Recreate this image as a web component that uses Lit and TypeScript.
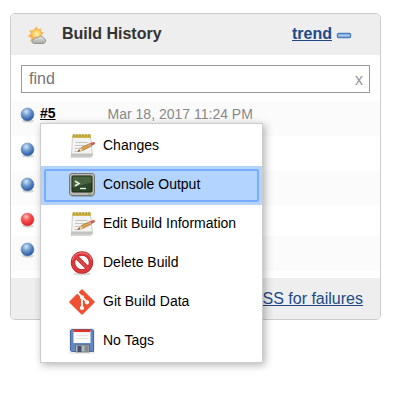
import { LitElement, html, css, svg } from "lit";
import { customElement, state } from "lit/decorators.js";

const weather = html`<svg class="weather" viewBox="0 0 20 20" aria-hidden="true">
  <defs>
    <radialGradient id="sun"><stop offset="0" stop-color="#fff6b0" /><stop offset="1" stop-color="#fbc04a" /></radialGradient>
    <linearGradient id="cloud" x2="0" y2="1"><stop offset="0" stop-color="#e8e8e6" /><stop offset="1" stop-color="#a9aaa7" /></linearGradient>
  </defs>
  <path fill="#f9b356" d="M9.500 0.500l1.500 3.500 3.500-1.800-1 3.600 4 1-3.500 2 1.500 4-9 1.500-3.500 1.200 1.500-3.500L.5 10l3.500-2.200L2.200 4l3.900.8z" />
  <circle cx="9.500" cy="8" r="5" fill="url(#sun)" stroke="#f5b04c" stroke-width=".7" />
  <path fill="url(#cloud)" stroke="#858683" stroke-width=".8" d="M7.500 17.500C4.500 17.500 4 14 6.800 13.300 7.300 11.400 9.500 10.800 11 11.800 12.500 9.300 16 9.800 16.500 12 19.800 12.800 19 17.500 16 17.500z" />
</svg>`;

const ball = (kind: string) => {
  const red = kind === "red";
  return html`<svg class="ball" viewBox="0 0 16 16" role="img" aria-label=${red ? "Failed" : "Success"}>
    <defs>
      <radialGradient id=${`ball-${kind}`} cx=".4" cy=".28" r=".72">
        <stop offset="0" stop-color=${red ? "#ffc4c4" : "#d6e6f6"} />
        <stop offset=".45" stop-color=${red ? "#fa5050" : "#6d9bd0"} />
        <stop offset="1" stop-color=${red ? "#d81c28" : "#25529a"} />
      </radialGradient>
    </defs>
    <ellipse cx="8" cy="14" rx="6" ry="1.600" fill="#000" opacity=".15" />
    <circle cx="7.500" cy="7.500" r="6.500" fill=${`url(#ball-${kind})`} stroke=${red ? "#d8636b" : "#6a8cb8"} stroke-width=".6" />
  </svg>`;
};

const notepad = svg`
  <path d="M2 23h20l1 2H1z" fill="#000" opacity=".15" />
  <path d="M3.500 3h18l2 19.500h-21z" fill="#f3f3f1" stroke="#c4c4c0" stroke-width=".8" />
  <path d="M2 20.500h21.500v3H2z" fill="#c2c2be" />
  <path d="M6.500 9.500h12M6 12.500h11M6 15.500h6M5.500 18.500h3" stroke="#c4c4c1" />
  <path d="M3.500 1.500h18.500v3.500H3.300z" fill="#d0b94c" />
  <path d="M5 1v3M8 1v3M11 1v3M14 1v3M17 1v3M20 1v3" stroke="#a38d30" />
  <path d="M9 18.500l3-3.800 9-4.200 1.600 2.500-9 4.500z" fill="#dfa04c" stroke="#94682e" stroke-width=".6" />
  <path d="M9 18.500l3-3.800 1.500 2.800z" fill="#ead6b4" />
  <path d="M8.500 18.800l1.500-2 1 1.300z" fill="#3d3020" />
  <path d="M20.800 10.600l3-1.600 2.200.6-.3 1.700-3.200 1.700z" fill="#d35a50" />
  <path d="M20 11l1-.5 1.500 2.500-1 .5z" fill="#bcbcbc" />`;

const terminal = svg`
  <path d="M4 23h18l2 2H2z" fill="#000" opacity=".2" />
  <rect x=".5" y="1.500" width="25" height="22" rx="2.500" fill="#b6b8b1" stroke="#777971" />
  <rect x="3" y="4" width="20" height="16" rx="1" fill="#2d4528" stroke="#172414" />
  <path d="M3.500 4.500h19v6l-19 5z" fill="#56704c" opacity=".7" />
  <path d="M6 9l4 2.500L6 14" fill="none" stroke="#e6f1df" stroke-width="1.600" />
  <path d="M11 16.500h6" stroke="#e6f1df" stroke-width="1.400" />
  <path d="M19 22h3" stroke="#7aa85a" />`;

const forbidden = svg`
  <ellipse cx="13" cy="24" rx="9" ry="1.500" fill="#000" opacity=".15" />
  <circle cx="13" cy="12.500" r="9" fill="#fff" fill-opacity=".8" stroke="#c0272d" stroke-width="4.400" />
  <path d="M6.500 6l13 13" stroke="#c0272d" stroke-width="4" />
  <circle cx="13" cy="12.500" r="9" fill="none" stroke="#d9393d" stroke-width="3" />
  <path d="M6.500 6l13 13" stroke="#dc4448" stroke-width="2.800" />
  <path d="M3.400 10a10 10 0 0 1 19.200 0" fill="none" stroke="#ee8484" stroke-width="1" />`;

const git = svg`
  <path d="M13 1.500L24.500 13 13 24.500 1.500 13z" fill="#f05133" stroke="#f05133" stroke-width="2.400" stroke-linejoin="round" />
  <path d="M8.500 3.500L13 8v11M13 8l5 5" fill="none" stroke="#fff" stroke-width="1.800" />
  <circle cx="13" cy="8.300" r="2" fill="#fff" /><circle cx="13" cy="19" r="2.100" fill="#fff" /><circle cx="18" cy="13.300" r="2.100" fill="#fff" />`;

const floppy = svg`
  <path d="M0 0h26v26H0z" fill="#ececec" />
  <path d="M2.500 1.500h21l1 1v21h-22l-1-1v-20z" fill="#6288c4" stroke="#4a689c" />
  <path d="M4.500 2h17v13h-17z" fill="#fbfbfb" />
  <path d="M4.500 1.500h17V4h-17z" fill="#e23326" />
  <path d="M7 7.500h12M7 10.500h12" stroke="#e4e4e4" />
  <path d="M6.500 17h14v7h-14z" fill="#b6b9bb" stroke="#4d5a6c" stroke-width=".7" />
  <path d="M8.500 18h4v6h-4z" fill="#41506b" />
  <path d="M15.500 17.500h4v6.500h-4z" fill="#85898d" />`;

@customElement("app-root")
export class AppRoot extends LitElement {
  @state() private active = 1;

  private builds = ["blue", "blue", "blue", "red", "blue"];
  private items = [
    { label: "Changes", icon: notepad },
    { label: "Console Output", icon: terminal },
    { label: "Edit Build Information", icon: notepad },
    { label: "Delete Build", icon: forbidden },
    { label: "Git Build Data", icon: git },
    { label: "No Tags", icon: floppy },
  ];

  static styles = css`
    :host {
      display: block;
      padding: 13px 31px 56px 10px;
      font: 14px/20px "Liberation Sans", Arial, sans-serif;
      color: #333;
    }
    * { box-sizing: border-box; }
    svg { display: block; flex: none; }
    a { color: #204a87; }
    .panel { border: 1px solid #ccc; border-radius: 5px; }
    .header {
      display: flex;
      align-items: center;
      height: 41px;
      padding: 0 28px 2px 16px;
      background: #eee;
      border-radius: 4px 4px 0 0;
      font-size: 16px;
      font-weight: bold;
    }
    .weather { width: 20px; height: 20px; margin-top: 4px; }
    h1 { flex: 1; margin: 0 0 0 15px; font-size: 16px; }
    .collapse { width: 16px; height: 16px; padding: 0; border: 0; margin-left: 4px; background: none; }
    .search { position: relative; padding: 10px 10px 8px; }
    .search input {
      display: block;
      width: 100%;
      height: 28px;
      padding: 0 28px 0 7px;
      border: 1px solid #999;
      border-radius: 0;
      font: 16px "Liberation Sans", Arial, sans-serif;
      color: #333;
    }
    .search input::placeholder { color: #757575; opacity: 1; }
    .clear {
      position: absolute;
      top: 15px;
      right: 13px;
      width: 16px;
      padding: 0;
      border: 0;
      background: none;
      font: 16px/20px "Liberation Sans", Arial, sans-serif;
      color: #999;
    }
    .builds { margin: 0; padding: 0 0 7px; list-style: none; }
    .build { position: relative; display: flex; height: 35px; padding: 6px 9px 0; }
    .build:nth-child(odd) { background: #fbfbfb; }
    .build.red { height: 30px; }
    .ball { width: 16px; height: 16px; }
    .number { margin: -4px 0 0 4px; height: 20px; font-weight: bold; color: #000; }
    .date { margin: -3px 0 0 52px; color: #888; }
    .footer {
      display: flex;
      justify-content: flex-end;
      align-items: center;
      height: 41px;
      padding: 0 17px;
      background: #eee;
      border-radius: 0 0 4px 4px;
      font-size: 16px;
    }
    .menu {
      position: absolute;
      z-index: 1;
      top: 22px;
      left: 29px;
      width: 223px;
      padding: 3px 0 1px;
      border: 1px solid #ccc;
      background: #fff;
      box-shadow: 2px 2px 8px rgba(0, 0, 0, 0.3);
    }
    .item {
      display: flex;
      align-items: center;
      width: 100%;
      height: 39px;
      padding: 3px;
      border: 0;
      background: none;
      font: 14px/20px "Liberation Sans", Arial, sans-serif;
      color: #000;
      text-align: left;
    }
    .face {
      display: flex;
      align-items: center;
      flex: 1;
      height: 33px;
      padding: 0 0 2px 23px;
      gap: 8px;
      border: 2px solid #fff;
      border-radius: 2px;
    }
    .item.active { background: #b3d4ff; }
    .active .face { border-color: #7aacfe; }
    .item:focus { outline: none; }
    .icon { width: 26px; height: 26px; }
    .label { padding-bottom: 2px; }
  `;

  render() {
    return html`<section class="panel">
      <div class="header">
        ${weather}
        <h1>Build History</h1>
        <a href="#trend">trend</a>
        <button class="collapse" aria-label="Collapse">
          <svg viewBox="0 0 16 16" width="16" height="16">
            <rect x="1.500" y="7.500" width="13" height="4" rx="1" fill="#a8c6ea" stroke="#4a7dbd" stroke-width="1.400" />
          </svg>
        </button>
      </div>
      <div class="search">
        <input type="text" placeholder="find" aria-label="find" />
        <button class="clear" aria-label="Clear">x</button>
      </div>
      <ul class="builds">
        ${this.builds.map((kind, i) => html`<li class="build ${kind}">
          ${ball(kind)}
          ${i === 0 ? html`<a class="number" href="#5">#5</a>
            <span class="date">Mar 18, 2017 11:24 PM</span>
            ${this.menu()}` : ""}
        </li>`)}
      </ul>
      <div class="footer"><a href="#failures">RSS for failures</a></div>
    </section>`;
  }

  private menu() {
    return html`<div class="menu" role="menu">
      ${this.items.map((item, i) => html`<button
        class="item ${i === this.active ? "active" : ""}"
        role="menuitem"
        @mouseenter=${() => (this.active = i)}
      ><span class="face">
        <svg class="icon" viewBox="0 0 26 26" aria-hidden="true">${item.icon}</svg>
        <span class="label">${item.label}</span>
      </span></button>`)}
    </div>`;
  }
}
